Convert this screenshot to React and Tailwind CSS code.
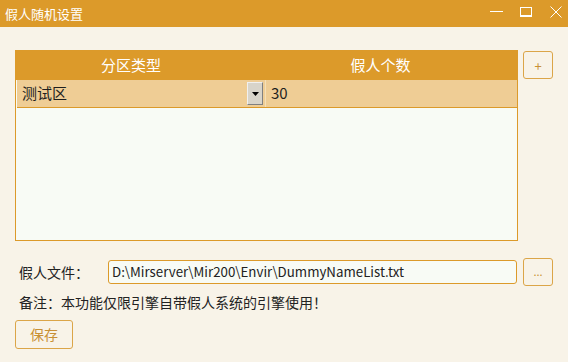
export default function App() {
  const font = { fontFamily: '"Noto Sans CJK SC", "Noto Sans", sans-serif' };
  return (
    <div className="w-[568px] h-[362px] bg-[#f8f3e8] flex flex-col overflow-hidden" style={font}>
      <div className="h-[27px] bg-[#dc9a2a] flex items-center justify-between shrink-0">
        <span className="pl-[5px] text-white text-[13px] leading-none">假人随机设置</span>
        <div className="flex items-center h-full mr-[-3px]">
          <div className="w-[30px] h-full flex items-center justify-center">
            <div className="w-[13px] h-[1px] bg-white mt-[-5px]" />
          </div>
          <div className="w-[30px] h-full flex items-center justify-center">
            <div className="w-[12px] h-[10px] border border-white border-b-2 mt-[-3px]" />
          </div>
          <div className="w-[30px] h-full flex items-center justify-center">
            <svg width="12" height="12" viewBox="0 0 12 12" className="mt-[-3px]">
              <path d="M0.5 0.5 L11.5 11.5 M11.5 0.5 L0.5 11.5" stroke="white" strokeWidth="1" />
            </svg>
          </div>
        </div>
      </div>

      <div className="flex flex-col pl-[15px] pt-[23px]">
        <div className="flex items-start gap-[5px]">
          <div className="w-[503px] h-[191px] border border-[#dc9a2a] bg-[#f8fbf5] flex flex-col">
            <div className="h-[29px] bg-[#dc9a2a] flex text-white text-[15px]">
              <div className="w-[250px] flex items-center justify-center pr-[20px]">分区类型</div>
              <div className="flex-1 flex items-center justify-center pr-[22px]">假人个数</div>
            </div>
            <div className="h-[28px] bg-[#efcd95] border-b border-[#dc9a2a] flex ml-[1px] text-[15px] text-[#1e1e1e]">
              <div className="w-[249px] flex items-center justify-between pl-[5px] pr-[2px] border-r border-[#f5e0b8]">
                <span>测试区</span>
                <div className="w-[16px] h-[23px] bg-[#d8d4ca] border border-[#808080] border-t-[#f0f0f0] border-l-[#f0f0f0] flex items-center justify-center">
                  <svg width="7" height="4" viewBox="0 0 7 4"><path d="M0 0 L7 0 L3.5 4 Z" fill="#000" /></svg>
                </div>
              </div>
              <div className="flex-1 flex items-center pl-[5px]">30</div>
            </div>
          </div>
          <button className="w-[30px] h-[28px] mt-[1px] border border-[#dba548] rounded-[3px] bg-[#f8f3e8] text-[#c89035] text-[13px] flex items-center justify-center leading-none">+</button>
        </div>

        <div className="flex items-center mt-[17px] h-[28px]">
          <span className="w-[93px] pl-[4px] text-[14px] text-[#222]">假人文件：</span>
          <div className="w-[409px] h-[24px] border border-[#dc9a2a] rounded-[3px] bg-[#f8fbf5] flex items-center pl-[3px] text-[13.3px] text-[#222]">
            D:\Mirserver\Mir200\Envir\DummyNameList.txt
          </div>
          <button className="w-[30px] h-[28px] ml-[6px] border border-[#dba548] rounded-[3px] bg-[#f8f3e8] text-[#c89035] text-[11px] flex items-center justify-center leading-none pb-[2px]">...</button>
        </div>

        <div className="pl-[4px] mt-[6px] text-[14px] text-[#222] leading-[20px]">备注：本功能仅限引擎自带假人系统的引擎使用！</div>

        <button className="w-[58px] h-[29px] mt-[8px] border border-[#dba548] rounded-[3px] bg-[#f8f3e8] text-[#c89035] text-[14px] flex items-center justify-center">保存</button>
      </div>
    </div>
  );
}
